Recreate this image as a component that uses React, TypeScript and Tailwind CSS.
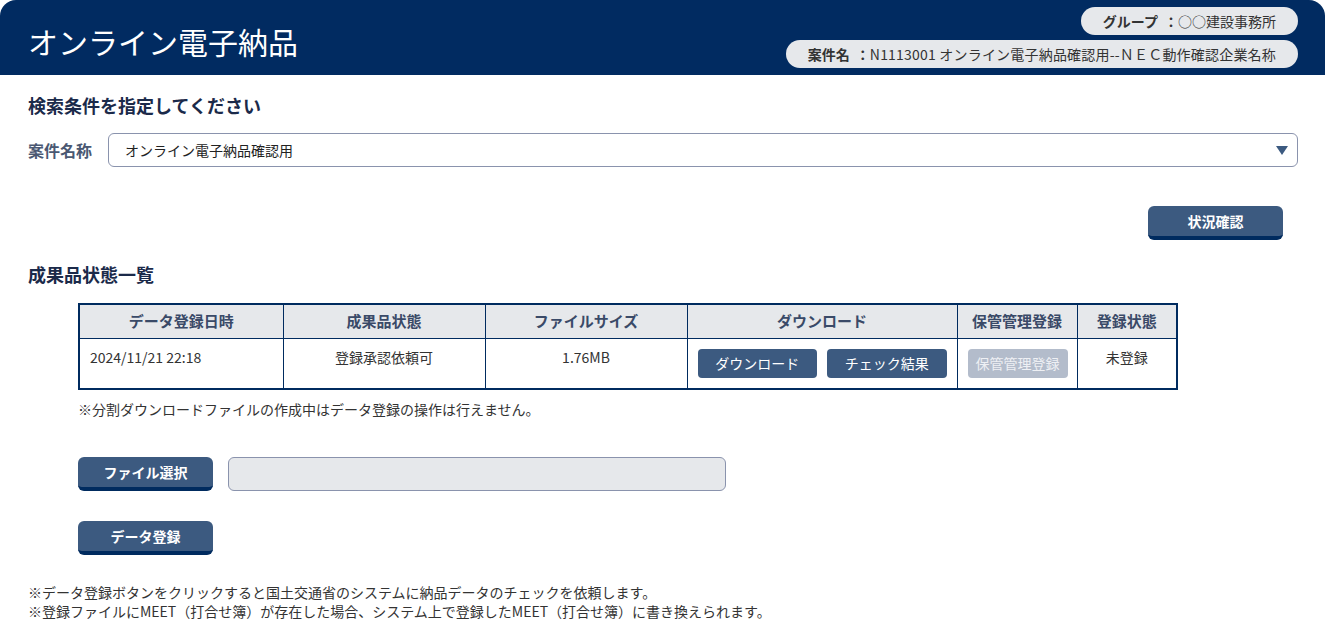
const font = { fontFamily: '"Noto Sans CJK JP", "Noto Sans", sans-serif' };

const NavyButton = ({ label, className = "" }: { label: string; className?: string }) => (
  <button
    className={`h-[34px] rounded-md border-b-4 border-[#002b5f] bg-[#3c5a80] text-[14px] font-bold text-white ${className}`}
  >
    {label}
  </button>
);

const TableHeadCell = ({ children, w }: { children: React.ReactNode; w: string }) => (
  <th className={`${w} h-[34px] border border-[#002b5f] bg-[#e6e8eb] text-center text-[15px] font-bold text-[#3a4a68]`}>
    {children}
  </th>
);

export default function App() {
  return (
    <div style={font} className="min-h-screen w-full bg-white text-[#333]">
      <header className="flex h-[75px] items-start justify-between rounded-t-[16px] bg-[#012b61] pr-[27px]">
        <h1 className="pl-[28px] pt-[21px] text-[30px] leading-[40px] text-white">オンライン電子納品</h1>
        <div className="flex flex-col items-end gap-[5px] pt-[7px]">
          <div className="flex h-[28px] items-center rounded-full bg-[#e6e8eb] px-[22px] text-[14px] text-[#333]">
            <span className="font-bold">グループ</span>
            <span className="ml-[6px] font-bold">：</span>
            <span>○○建設事務所</span>
          </div>
          <div className="flex h-[28px] items-center rounded-full bg-[#e6e8eb] px-[22px] text-[14px] text-[#333]">
            <span className="font-bold">案件名</span>
            <span className="ml-[6px] font-bold">：</span>
            <span className="tracking-[0.2px]">N1113001 オンライン電子納品確認用--ＮＥＣ動作確認企業名称</span>
          </div>
        </div>
      </header>

      <main className="px-[27px] pl-[28px]">
        <h2 className="mt-[17px] text-[18px] font-bold leading-[26px] text-[#1b2a4a]">検索条件を指定してください</h2>

        <div className="mt-[15px] flex items-center gap-[16px]">
          <span className="text-[16px] font-bold text-[#4a5872]">案件名称</span>
          <div className="relative flex h-[34px] flex-1 items-center rounded-md border border-[#8a93ad] bg-white pl-[16px] text-[14px] text-[#222]">
            オンライン電子納品確認用
            <svg className="absolute right-[9px] top-[12px]" width="12" height="9" viewBox="0 0 12 9">
              <path d="M0 0 L12 0 L6 9 Z" fill="#3c5a80" />
            </svg>
          </div>
        </div>

        <div className="mt-[39px] flex justify-end pr-[15px]">
          <NavyButton label="状況確認" className="w-[135px]" />
        </div>

        <h2 className="mt-[21px] text-[18px] font-bold leading-[26px] text-[#1b2a4a]">成果品状態一覧</h2>

        <div className="pl-[50px]">
          <table className="mt-[16px] w-[1098px] table-fixed border-collapse border-2 border-[#002b5f]">
            <thead>
              <tr>
                <TableHeadCell w="w-[204px]">データ登録日時</TableHeadCell>
                <TableHeadCell w="w-[202px]">成果品状態</TableHeadCell>
                <TableHeadCell w="w-[202px]">ファイルサイズ</TableHeadCell>
                <TableHeadCell w="w-[270px]">ダウンロード</TableHeadCell>
                <TableHeadCell w="w-[120px]">保管管理登録</TableHeadCell>
                <TableHeadCell w="w-[100px]">登録状態</TableHeadCell>
              </tr>
            </thead>
            <tbody>
              <tr className="h-[51px] align-top text-[14px] text-[#333]">
                <td className="border border-[#002b5f] pl-[10px] pt-[8px]">2024/11/21 22:18</td>
                <td className="border border-[#002b5f] pt-[8px] text-center">登録承認依頼可</td>
                <td className="border border-[#002b5f] pt-[8px] text-center">1.76MB</td>
                <td className="border border-[#002b5f] px-[10px] pt-[10px]">
                  <div className="flex gap-[10px]">
                    <button className="h-[29px] w-[120px] rounded-[4px] bg-[#3c5a80] text-[14px] text-white">ダウンロード</button>
                    <button className="h-[29px] w-[120px] rounded-[4px] bg-[#3c5a80] text-[14px] text-white">チェック結果</button>
                  </div>
                </td>
                <td className="border border-[#002b5f] px-[10px] pt-[10px]">
                  <button className="h-[29px] w-[100px] rounded-[4px] bg-[#b3bccb] text-[14px] text-[#eef0f4]">保管管理登録</button>
                </td>
                <td className="border border-[#002b5f] pt-[8px] text-center">未登録</td>
              </tr>
            </tbody>
          </table>

          <p className="mt-[9px] text-[14px] leading-[20px] text-[#333]">※分割ダウンロードファイルの作成中はデータ登録の操作は行えません。</p>

          <div className="mt-[38px] flex items-center gap-[15px]">
            <NavyButton label="ファイル選択" className="w-[135px]" />
            <div className="h-[34px] w-[498px] rounded-md border border-[#8a93ad] bg-[#e6e8eb]" />
          </div>

          <div className="mt-[30px]">
            <NavyButton label="データ登録" className="w-[135px]" />
          </div>
        </div>

        <div className="mt-[28px] text-[14px] leading-[19px] text-[#333]">
          <p>※データ登録ボタンをクリックすると国土交通省のシステムに納品データのチェックを依頼します。</p>
          <p>※登録ファイルにMEET（打合せ簿）が存在した場合、システム上で登録したMEET（打合せ簿）に書き換えられます。</p>
        </div>
      </main>
    </div>
  );
}
